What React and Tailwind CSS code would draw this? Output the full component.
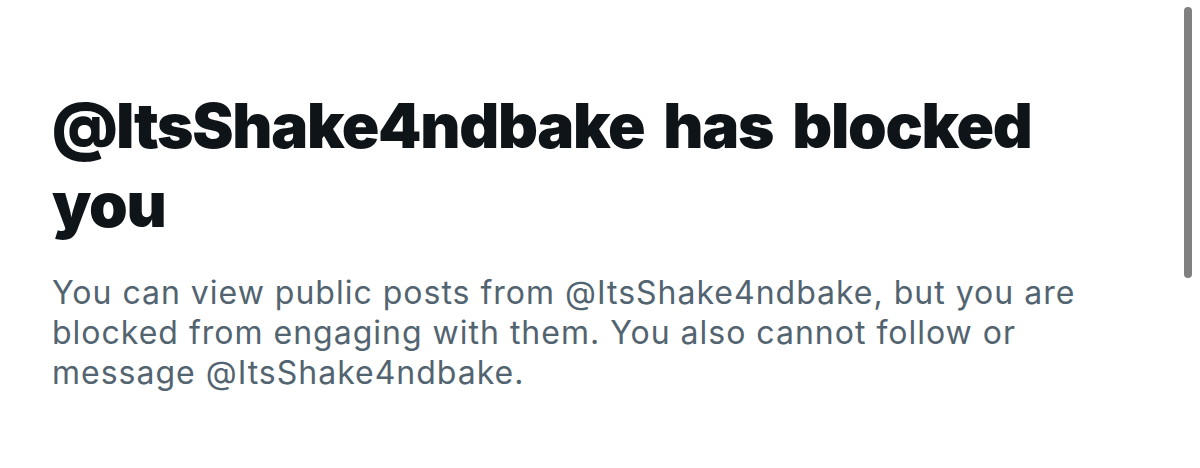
export default function App() {
  return (
    <div className="relative h-[468px] w-[1200px] overflow-hidden bg-white font-['Inter',sans-serif]">
      <div className="w-[1110px] pl-[52px] pt-[86px]">
        <h1 className="text-[62px] font-black leading-[79px] tracking-[-1.3px] [word-spacing:8px] text-[#0f1419]">
          @ItsShake4ndbake has blocked you
        </h1>
        <p className="mt-[29px] text-[32px] leading-[40px] tracking-[1px] text-[#536471]">
          You can view public posts from @ItsShake4ndbake, but you are blocked from engaging with them. You also cannot follow or message @ItsShake4ndbake.
        </p>
      </div>
      <div className="absolute right-[8px] top-[7px] h-[271px] w-[8px] rounded-full bg-[#808080]" />
    </div>
  );
}
